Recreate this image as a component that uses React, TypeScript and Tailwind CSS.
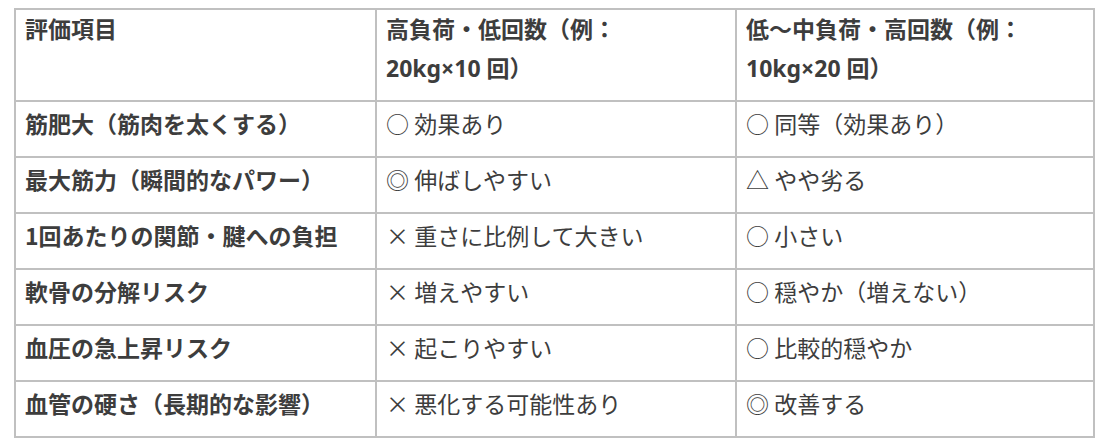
import React from 'react';

const headers: React.ReactNode[] = [
    '評価項目',
    <>高負荷・低回数（例：<br />20kg×10 回）</>,
    <>低〜中負荷・高回数（例：<br />10kg×20 回）</>,
];

const rows: [string, string, string][] = [
    ['筋肥大（筋肉を太くする）', '○ 効果あり', '○ 同等（効果あり）'],
    ['最大筋力（瞬間的なパワー）', '◎ 伸ばしやすい', '△ やや劣る'],
    ['1回あたりの関節・腱への負担', '× 重さに比例して大きい', '○ 小さい'],
    ['軟骨の分解リスク', '× 増えやすい', '○ 穏やか（増えない）'],
    ['血圧の急上昇リスク', '× 起こりやすい', '○ 比較的穏やか'],
    ['血管の硬さ（長期的な影響）', '× 悪化する可能性あり', '◎ 改善する'],
];

export default function App() {
    return (
        <div className="w-[1104px] h-[448px] bg-white pt-[8px] pl-[14px] font-['Noto_Sans_CJK_JP','Noto_Sans',sans-serif] text-[#3d3d3d]">
            <table className="w-[1079px] table-fixed border-collapse border-2 border-[#c0c0c0] text-[23px] leading-[39px]">
                <colgroup>
                    <col className="w-[361px]" />
                    <col className="w-[360px]" />
                    <col className="w-[358px]" />
                </colgroup>
                <thead>
                    <tr>
                        {headers.map((h, i) => (
                            <th key={i} className="border-2 border-[#c0c0c0] px-[9px] pt-0 pb-[12px] text-left align-top font-bold font-['Noto_Sans','Noto_Sans_CJK_JP',sans-serif]">
                                {h}
                            </th>
                        ))}
                    </tr>
                </thead>
                <tbody>
                    {rows.map((r) => (
                        <tr key={r[0]}>
                            <td className="border-2 border-[#c0c0c0] px-[9px] pt-[2px] pb-[13px] align-top font-bold">{r[0]}</td>
                            <td className="border-2 border-[#c0c0c0] px-[9px] pt-[2px] pb-[13px] align-top">{r[1]}</td>
                            <td className="border-2 border-[#c0c0c0] px-[9px] pt-[2px] pb-[13px] align-top">{r[2]}</td>
                        </tr>
                    ))}
                </tbody>
            </table>
        </div>
    );
}
